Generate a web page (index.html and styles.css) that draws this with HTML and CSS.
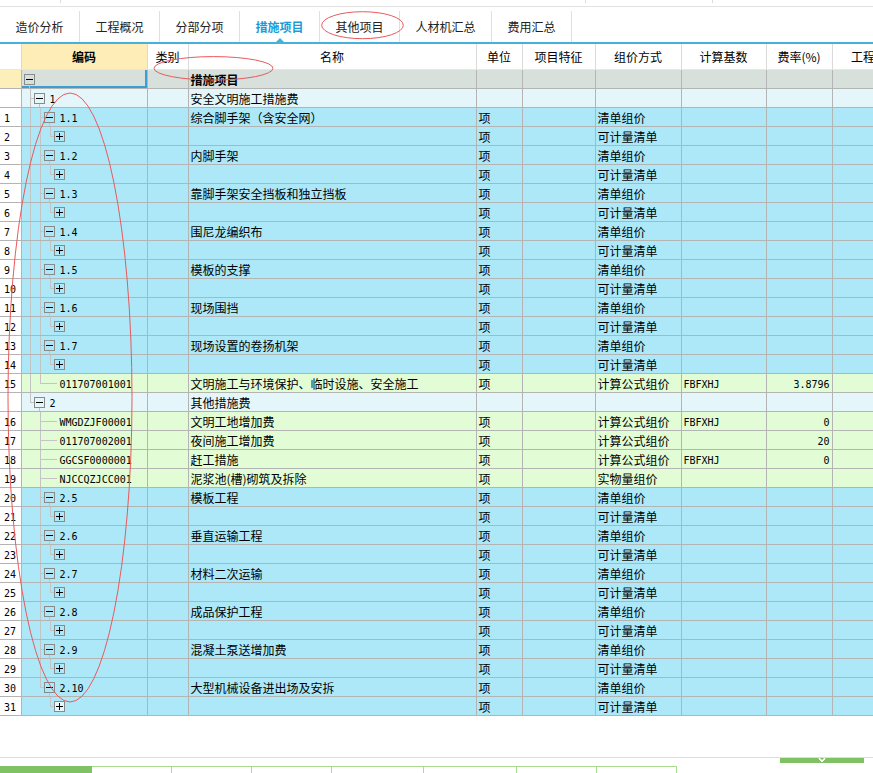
FILE: index.html
```html
<!DOCTYPE html>
<html lang="zh">
<head>
<meta charset="utf-8">
<title>措施项目</title>
<link rel="stylesheet" href="styles.css">
</head>
<body>
<div class="page">
  <div class="topstrip"></div>
  <div class="tabs">
    <div class="tab">造价分析</div>
    <div class="tab">工程概况</div>
    <div class="tab">分部分项</div>
    <div class="tab on">措施项目</div>
    <div class="tab">其他项目</div>
    <div class="tab wide">人材机汇总</div>
    <div class="tab">费用汇总</div>
  </div>
  <table class="grid">
    <colgroup>
      <col class="w-n"><col class="w-c"><col class="w-k"><col class="w-m"><col class="w-u"><col class="w-f"><col class="w-z"><col class="w-b"><col class="w-r"><col class="w-g">
    </colgroup>
    <thead>
      <tr class="hd"><th class="n"></th><th class="hc">编码</th><th>类别</th><th>名称</th><th>单位</th><th>项目特征</th><th>组价方式</th><th>计算基数</th><th>费率(%)</th><th>工程量</th></tr>
    </thead>
    <tbody>
      <tr class="root"><td class="n"></td><td class="c sel"><div class="tr"><b class="bx m"></b></div></td><td></td><td class="bold">措施项目</td><td></td><td></td><td></td><td></td><td></td><td></td></tr>
      <tr class="grp"><td class="n"></td><td class="c"><div class="tr"><i class="t"></i><b class="bx m"></b><span class="cd">1</span></div></td><td></td><td>安全文明施工措施费</td><td></td><td></td><td></td><td></td><td></td><td></td></tr>

      <tr class="blue"><td class="n">1</td><td class="c"><div class="tr"><i class="v"></i><i class="t"></i><b class="bx m"></b><span class="cd">1.1</span></div></td><td></td><td>综合脚手架（含安全网）</td><td>项</td><td></td><td>清单组价</td><td></td><td></td><td></td></tr>
      <tr class="blue"><td class="n">2</td><td class="c"><div class="tr"><i class="v"></i><i class="v"></i><i class="l"></i><b class="bx p"></b></div></td><td></td><td></td><td>项</td><td></td><td>可计量清单</td><td></td><td></td><td></td></tr>
      <tr class="blue"><td class="n">3</td><td class="c"><div class="tr"><i class="v"></i><i class="t"></i><b class="bx m"></b><span class="cd">1.2</span></div></td><td></td><td>内脚手架</td><td>项</td><td></td><td>清单组价</td><td></td><td></td><td></td></tr>
      <tr class="blue"><td class="n">4</td><td class="c"><div class="tr"><i class="v"></i><i class="v"></i><i class="l"></i><b class="bx p"></b></div></td><td></td><td></td><td>项</td><td></td><td>可计量清单</td><td></td><td></td><td></td></tr>
      <tr class="blue"><td class="n">5</td><td class="c"><div class="tr"><i class="v"></i><i class="t"></i><b class="bx m"></b><span class="cd">1.3</span></div></td><td></td><td>靠脚手架安全挡板和独立挡板</td><td>项</td><td></td><td>清单组价</td><td></td><td></td><td></td></tr>
      <tr class="blue"><td class="n">6</td><td class="c"><div class="tr"><i class="v"></i><i class="v"></i><i class="l"></i><b class="bx p"></b></div></td><td></td><td></td><td>项</td><td></td><td>可计量清单</td><td></td><td></td><td></td></tr>
      <tr class="blue"><td class="n">7</td><td class="c"><div class="tr"><i class="v"></i><i class="t"></i><b class="bx m"></b><span class="cd">1.4</span></div></td><td></td><td>围尼龙编织布</td><td>项</td><td></td><td>清单组价</td><td></td><td></td><td></td></tr>
      <tr class="blue"><td class="n">8</td><td class="c"><div class="tr"><i class="v"></i><i class="v"></i><i class="l"></i><b class="bx p"></b></div></td><td></td><td></td><td>项</td><td></td><td>可计量清单</td><td></td><td></td><td></td></tr>
      <tr class="blue"><td class="n">9</td><td class="c"><div class="tr"><i class="v"></i><i class="t"></i><b class="bx m"></b><span class="cd">1.5</span></div></td><td></td><td>模板的支撑</td><td>项</td><td></td><td>清单组价</td><td></td><td></td><td></td></tr>
      <tr class="blue"><td class="n">10</td><td class="c"><div class="tr"><i class="v"></i><i class="v"></i><i class="l"></i><b class="bx p"></b></div></td><td></td><td></td><td>项</td><td></td><td>可计量清单</td><td></td><td></td><td></td></tr>
      <tr class="blue"><td class="n">11</td><td class="c"><div class="tr"><i class="v"></i><i class="t"></i><b class="bx m"></b><span class="cd">1.6</span></div></td><td></td><td>现场围挡</td><td>项</td><td></td><td>清单组价</td><td></td><td></td><td></td></tr>
      <tr class="blue"><td class="n">12</td><td class="c"><div class="tr"><i class="v"></i><i class="v"></i><i class="l"></i><b class="bx p"></b></div></td><td></td><td></td><td>项</td><td></td><td>可计量清单</td><td></td><td></td><td></td></tr>
      <tr class="blue"><td class="n">13</td><td class="c"><div class="tr"><i class="v"></i><i class="t"></i><b class="bx m"></b><span class="cd">1.7</span></div></td><td></td><td>现场设置的卷扬机架</td><td>项</td><td></td><td>清单组价</td><td></td><td></td><td></td></tr>
      <tr class="blue"><td class="n">14</td><td class="c"><div class="tr"><i class="v"></i><i class="v"></i><i class="l"></i><b class="bx p"></b></div></td><td></td><td></td><td>项</td><td></td><td>可计量清单</td><td></td><td></td><td></td></tr>
      <tr class="green"><td class="n">15</td><td class="c"><div class="tr"><i class="v"></i><i class="l"></i><i class="h"></i><span class="cd lf">011707001001</span></div></td><td></td><td>文明施工与环境保护、临时设施、安全施工</td><td>项</td><td></td><td>计算公式组价</td><td class="mono">FBFXHJ</td><td class="r">3.8796</td><td></td></tr>

      <tr class="grp"><td class="n"></td><td class="c"><div class="tr"><i class="l"></i><b class="bx m"></b><span class="cd">2</span></div></td><td></td><td>其他措施费</td><td></td><td></td><td></td><td></td><td></td><td></td></tr>
      <tr class="green"><td class="n">16</td><td class="c"><div class="tr"><i></i><i class="t"></i><i class="h"></i><span class="cd lf">WMGDZJF00001</span></div></td><td></td><td>文明工地增加费</td><td>项</td><td></td><td>计算公式组价</td><td class="mono">FBFXHJ</td><td class="r">0</td><td></td></tr>
      <tr class="green"><td class="n">17</td><td class="c"><div class="tr"><i></i><i class="t"></i><i class="h"></i><span class="cd lf">011707002001</span></div></td><td></td><td>夜间施工增加费</td><td>项</td><td></td><td>计算公式组价</td><td class="mono"></td><td class="r">20</td><td></td></tr>
      <tr class="green"><td class="n">18</td><td class="c"><div class="tr"><i></i><i class="t"></i><i class="h"></i><span class="cd lf">GGCSF0000001</span></div></td><td></td><td>赶工措施</td><td>项</td><td></td><td>计算公式组价</td><td class="mono">FBFXHJ</td><td class="r">0</td><td></td></tr>
      <tr class="green"><td class="n">19</td><td class="c"><div class="tr"><i></i><i class="t"></i><i class="h"></i><span class="cd lf">NJCCQZJCC001</span></div></td><td></td><td>泥浆池(槽)砌筑及拆除</td><td>项</td><td></td><td>实物量组价</td><td></td><td></td><td></td></tr>

      <tr class="blue"><td class="n">20</td><td class="c"><div class="tr"><i></i><i class="t"></i><b class="bx m"></b><span class="cd">2.5</span></div></td><td></td><td>模板工程</td><td>项</td><td></td><td>清单组价</td><td></td><td></td><td></td></tr>
      <tr class="blue"><td class="n">21</td><td class="c"><div class="tr"><i></i><i class="v"></i><i class="l"></i><b class="bx p"></b></div></td><td></td><td></td><td>项</td><td></td><td>可计量清单</td><td></td><td></td><td></td></tr>
      <tr class="blue"><td class="n">22</td><td class="c"><div class="tr"><i></i><i class="t"></i><b class="bx m"></b><span class="cd">2.6</span></div></td><td></td><td>垂直运输工程</td><td>项</td><td></td><td>清单组价</td><td></td><td></td><td></td></tr>
      <tr class="blue"><td class="n">23</td><td class="c"><div class="tr"><i></i><i class="v"></i><i class="l"></i><b class="bx p"></b></div></td><td></td><td></td><td>项</td><td></td><td>可计量清单</td><td></td><td></td><td></td></tr>
      <tr class="blue"><td class="n">24</td><td class="c"><div class="tr"><i></i><i class="t"></i><b class="bx m"></b><span class="cd">2.7</span></div></td><td></td><td>材料二次运输</td><td>项</td><td></td><td>清单组价</td><td></td><td></td><td></td></tr>
      <tr class="blue"><td class="n">25</td><td class="c"><div class="tr"><i></i><i class="v"></i><i class="l"></i><b class="bx p"></b></div></td><td></td><td></td><td>项</td><td></td><td>可计量清单</td><td></td><td></td><td></td></tr>
      <tr class="blue"><td class="n">26</td><td class="c"><div class="tr"><i></i><i class="t"></i><b class="bx m"></b><span class="cd">2.8</span></div></td><td></td><td>成品保护工程</td><td>项</td><td></td><td>清单组价</td><td></td><td></td><td></td></tr>
      <tr class="blue"><td class="n">27</td><td class="c"><div class="tr"><i></i><i class="v"></i><i class="l"></i><b class="bx p"></b></div></td><td></td><td></td><td>项</td><td></td><td>可计量清单</td><td></td><td></td><td></td></tr>
      <tr class="blue"><td class="n">28</td><td class="c"><div class="tr"><i></i><i class="t"></i><b class="bx m"></b><span class="cd">2.9</span></div></td><td></td><td>混凝土泵送增加费</td><td>项</td><td></td><td>清单组价</td><td></td><td></td><td></td></tr>
      <tr class="blue"><td class="n">29</td><td class="c"><div class="tr"><i></i><i class="v"></i><i class="l"></i><b class="bx p"></b></div></td><td></td><td></td><td>项</td><td></td><td>可计量清单</td><td></td><td></td><td></td></tr>
      <tr class="blue"><td class="n">30</td><td class="c"><div class="tr"><i></i><i class="l"></i><b class="bx m"></b><span class="cd">2.10</span></div></td><td></td><td>大型机械设备进出场及安拆</td><td>项</td><td></td><td>清单组价</td><td></td><td></td><td></td></tr>
      <tr class="blue"><td class="n">31</td><td class="c"><div class="tr"><i></i><i></i><i class="l"></i><b class="bx p lite"></b></div></td><td></td><td></td><td>项</td><td></td><td>可计量清单</td><td></td><td></td><td></td></tr>
    </tbody>
  </table>
  <div class="spacer"></div>
  <div class="foot">
    <div class="foot-top"><div class="gbar"><svg width="12" height="6" viewBox="0 0 12 6"><polyline points="2,0 6,4 10,0" fill="none" stroke="#fff" stroke-width="1.2"/><polyline points="3,2 6,5 9,2" fill="none" stroke="#fff" stroke-width="1"/></svg></div></div>
    <div class="btabs">
      <div class="bt fill"></div>
      <div class="bt"></div>
      <div class="bt"></div>
      <div class="bt"></div>
      <div class="bt w92"></div>
      <div class="bt w93"></div>
      <div class="bt"></div>
      <div class="bt"></div>
    </div>
  </div>
</div>
<svg class="marks" width="873" height="773" viewBox="0 0 873 773">
  <ellipse cx="362.5" cy="25.2" rx="40.8" ry="13.5"/>
  <ellipse cx="213.5" cy="68.3" rx="59.5" ry="11.7"/>
  <ellipse cx="70" cy="397.5" rx="62" ry="304.5"/>
</svg>
</body>
</html>
```
FILE: styles.css
```css
* { box-sizing: border-box; margin: 0; padding: 0; }
html, body { background: #fff; }
body {
  width: 873px;
  height: 773px;
  overflow: hidden;
  position: relative;
  font-family: "Noto Sans CJK SC", "Liberation Sans", sans-serif;
  font-size: 12px;
  color: #000;
}
.page { display: flex; flex-direction: column; height: 773px; width: 873px; overflow: hidden; }

.topstrip {
  flex: none;
  height: 7px;
  border-bottom: 1px solid #e2e2e2;
  background:
    linear-gradient(#dcdcdc, #dcdcdc) 60px 0 / 1px 3px no-repeat,
    linear-gradient(#dcdcdc, #dcdcdc) 585px 0 / 1px 3px no-repeat,
    linear-gradient(#dcdcdc, #dcdcdc) 712px 0 / 1px 3px no-repeat;
}

.tabs {
  flex: none;
  display: flex;
  height: 37px;
  padding-top: 4px;
  border-bottom: 2px solid #45b1dd;
}
.tab {
  position: relative;
  width: 80px;
  border-right: 1px solid #e0e0e0;
  display: flex;
  align-items: center;
  justify-content: center;
  font-size: 12px;
  color: #222;
}
.tab.wide { width: 92px; }
.tab.on { color: #1b9cd8; font-weight: bold; }
.tab.on::after {
  content: "";
  position: absolute;
  left: 50%;
  bottom: 0;
  margin-left: -4px;
  border-left: 4px solid transparent;
  border-right: 4px solid transparent;
  border-bottom: 4px solid #45b1dd;
}

.grid {
  flex: none;
  border-collapse: collapse;
  table-layout: fixed;
  width: 906px;
}
.w-n { width: 21px; }
.w-c { width: 126px; }
.w-k { width: 41px; }
.w-m { width: 288px; }
.w-u { width: 46px; }
.w-f { width: 73px; }
.w-z { width: 86px; }
.w-b { width: 85px; }
.w-r { width: 66px; }
.w-g { width: 74px; }

.grid th {
  height: 25px;
  font-weight: normal;
  font-size: 12px;
  text-align: center;
  vertical-align: middle;
  background: #fff;
  border-left: 1px solid #dadada;
  border-right: 1px solid #dadada;
  border-bottom: 1px solid #e6e6e6;
  white-space: nowrap;
  overflow: hidden;
}
.grid th.n { border-left: 0; }
.grid th.hc { background: #feedb6; font-weight: bold; }

.grid td {
  height: 19px;
  padding: 1px 2px 0 2px;
  line-height: 17px;
  border: 1px solid #b4b4b4;
  white-space: nowrap;
  overflow: hidden;
  vertical-align: top;
}
.grid td.n {
  border-left: 0;
  background: #fff;
  padding: 3px 0 0 4px;
  line-height: 15px;
  font-family: "DejaVu Sans Mono", "Liberation Mono", monospace;
  font-size: 10px;
}
.grid td.mono {
  padding: 3px 2px 0 2px;
  line-height: 15px;
  font-family: "DejaVu Sans Mono", "Liberation Mono", monospace;
  font-size: 10px;
}
.grid td.r {
  text-align: right;
  padding: 3px 2px 0 2px;
  line-height: 15px;
  font-family: "DejaVu Sans Mono", "Liberation Mono", monospace;
  font-size: 10px;
}
.grid td.bold { font-weight: bold; }

.root td { background: #d8e0dc; }
.root td.n { background: #fdefb9; }
.grp td { background: #e4f6fa; }
.blue td { background: #ade8f9; }
.green td { background: #e2fcd6; }
.grid td.sel { box-shadow: inset -2px -2px 0 #3aa0d4; }

.grid td.c { padding: 0 0 0 3px; }
.tr { display: flex; align-items: flex-start; height: 18px; }
.tr i { flex: none; display: block; width: 10px; height: 18px; }
.tr i.v { background: linear-gradient(#c4c4c4, #c4c4c4) 5px 0 / 1px 100% no-repeat; }
.tr i.t {
  background:
    linear-gradient(#c4c4c4, #c4c4c4) 5px 0 / 1px 100% no-repeat,
    linear-gradient(#c4c4c4, #c4c4c4) 5px 9px / 5px 1px no-repeat;
}
.tr i.l {
  background:
    linear-gradient(#c4c4c4, #c4c4c4) 5px 0 / 1px 10px no-repeat,
    linear-gradient(#c4c4c4, #c4c4c4) 5px 9px / 5px 1px no-repeat;
}
.tr i.h { width: 12px; background: linear-gradient(#c4c4c4, #c4c4c4) 0 9px / 12px 1px no-repeat; }

.bx {
  flex: none;
  position: relative;
  display: block;
  width: 11px;
  height: 11px;
  margin: 4px 0 0 -1px;
  border: 1px solid #8a8a8a;
}
.bx::before {
  content: "";
  position: absolute;
  left: 1px;
  top: 4px;
  width: 7px;
  height: 1px;
  background: #000;
}
.bx.m::after {
  content: "";
  position: absolute;
  left: 4px;
  top: 10px;
  width: 1px;
  height: 4px;
  background: #c4c4c4;
}
.bx.p::after {
  content: "";
  position: absolute;
  left: 4px;
  top: 1px;
  width: 1px;
  height: 7px;
  background: #000;
}
.bx.lite { background: #e6f7fc; }

.cd {
  margin-left: 5px;
  padding-top: 3px;
  line-height: 15px;
  font-family: "DejaVu Sans Mono", "Liberation Mono", monospace;
  font-size: 10px;
}
.cd.lf { margin-left: 3px; }

.spacer { flex: 1; }
.foot {
  flex: none;
  height: 16px;
  border-top: 1px solid #dedede;
  display: flex;
  flex-direction: column;
}
.foot-top { height: 8px; display: flex; justify-content: flex-end; }
.gbar {
  width: 84px;
  height: 5px;
  margin-right: 9px;
  background: #7ec263;
  display: flex;
  justify-content: center;
  overflow: hidden;
}
.gbar svg { display: block; margin-top: -1px; }
.btabs { display: flex; height: 7px; }
.bt {
  width: 80px;
  height: 7px;
  border-top: 1px solid #a9dc8f;
  border-right: 1px solid #a9dc8f;
}
.bt.fill { width: 92px; background: #7ec263; border: 0; }
.bt.w92 { width: 92px; }
.bt.w93 { width: 93px; }

.marks {
  position: absolute;
  left: 0;
  top: 0;
  pointer-events: none;
}
.marks ellipse { fill: none; stroke: #e9595c; stroke-width: 1; }
```
